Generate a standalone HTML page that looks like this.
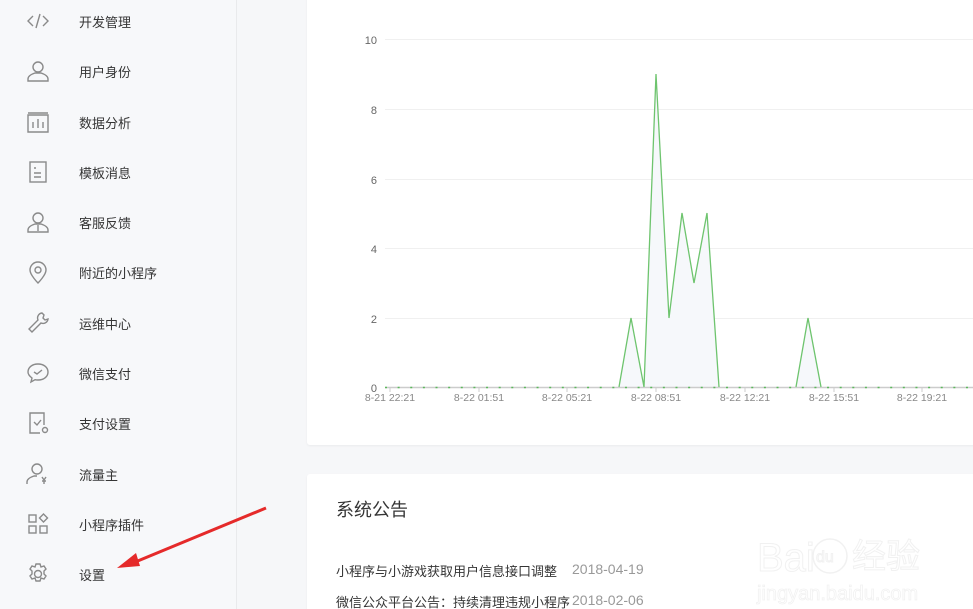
<!DOCTYPE html>
<html><head><meta charset="utf-8">
<style>
*{margin:0;padding:0;box-sizing:border-box}
html,body{width:973px;height:609px;overflow:hidden}
body{background:#f6f7f9;font-family:"Liberation Sans","Noto Sans CJK SC",sans-serif;position:relative}
#side{position:absolute;left:0;top:0;width:237px;height:609px;background:#f7f8fa;border-right:1px solid #e9eaec}
.it{position:absolute;left:0;width:237px;height:30px}
.it svg{position:absolute;left:25px;top:1px;width:26px;height:26px}
.it span{position:absolute;left:79px;top:5px;font-size:13px;color:#353535}
.card{position:absolute;left:307px;background:#fff;border-radius:3px;box-shadow:0 1px 2px rgba(0,0,0,.05)}
</style></head><body>
<div id="side">
<div class="it" style="top:7px"><svg viewBox="0 0 26 26" fill="none" stroke="#8a8a8a" stroke-width="1.4"><path d="M8 8l-5 5 5 5M18 8l5 5-5 5M15 6l-4 14"/></svg><span>开发管理</span></div>
<div class="it" style="top:57px"><svg viewBox="0 0 26 26" fill="none" stroke="#8a8a8a" stroke-width="1.4"><circle cx="13" cy="9" r="5"/><path d="M3 23v-2c0-3 4-5 7-6h6c3 1 7 3 7 6v2z"/></svg><span>用户身份</span></div>
<div class="it" style="top:108px"><svg viewBox="0 0 26 26" fill="none" stroke="#8a8a8a" stroke-width="1.4"><path d="M3 4h20M3 6h20v17H3zM8 19v-6M13 19v-9M18 19v-6"/></svg><span>数据分析</span></div>
<div class="it" style="top:158px"><svg viewBox="0 0 26 26" fill="none" stroke="#8a8a8a" stroke-width="1.4"><rect x="5" y="3" width="16" height="20"/><path d="M9 9h2M9 14h7M9 18h7"/></svg><span>模板消息</span></div>
<div class="it" style="top:208px"><svg viewBox="0 0 26 26" fill="none" stroke="#8a8a8a" stroke-width="1.4"><circle cx="13" cy="9" r="5"/><path d="M3 23v-2c0-3 4-5 7-6h6c3 1 7 3 7 6v2zM13 16v6"/></svg><span>客服反馈</span></div>
<div class="it" style="top:258px"><svg viewBox="0 0 26 26" fill="none" stroke="#8a8a8a" stroke-width="1.4"><path d="M13 24s-8-8-8-13a8 8 0 0116 0c0 5-8 13-8 13z"/><circle cx="13" cy="11" r="3"/></svg><span>附近的小程序</span></div>
<div class="it" style="top:309px"><svg viewBox="0 0 26 26" fill="none" stroke="#8a8a8a" stroke-width="1.4"><path d="M17 3a5 5 0 00-4 7L4 19l3 3 9-9a5 5 0 007-4l-3 1-2-2 1-3z"/></svg><span>运维中心</span></div>
<div class="it" style="top:359px"><svg viewBox="0 0 26 26" fill="none" stroke="#8a8a8a" stroke-width="1.4"><path d="M13 4c6 0 10 3.5 10 8s-4 8-10 8c-1 0-2 0-3-.3L6 22l1-4c-2-1.5-4-3.5-4-6 0-4.5 4-8 10-8z"/><path d="M9 12l3 2 5-4"/></svg><span>微信支付</span></div>
<div class="it" style="top:409px"><svg viewBox="0 0 26 26" fill="none" stroke="#8a8a8a" stroke-width="1.4"><path d="M15 23H5V3h14v12"/><path d="M9 12l3 3 4-5"/><circle cx="20" cy="20" r="2.5"/></svg><span>支付设置</span></div>
<div class="it" style="top:460px"><svg viewBox="0 0 26 26" fill="none" stroke="#8a8a8a" stroke-width="1.4"><circle cx="12" cy="8" r="5"/><path d="M2 23v-2c0-3 4-5 7-6h3M17 16l2 3 2-3M19 19v4M17 20h4"/></svg><span>流量主</span></div>
<div class="it" style="top:510px"><svg viewBox="0 0 26 26" fill="none" stroke="#8a8a8a" stroke-width="1.4"><rect x="4" y="4" width="7" height="7"/><rect x="4" y="15" width="7" height="7"/><rect x="15" y="15" width="7" height="7"/><path d="M18.5 3l4 4-4 4-4-4z"/></svg><span>小程序插件</span></div>
<div class="it" style="top:560px"><svg viewBox="0 0 26 26" fill="none" stroke="#8a8a8a" stroke-width="1.4"><path d="M11 3h4l1 3 3-1 2 3-2 2 0 3 2 2-2 3-3-1-1 3h-4l-1-3-3 1-2-3 2-2v-3l-2-2 2-3 3 1z"/><circle cx="13" cy="13" r="3.5"/></svg><span>设置</span></div>
</div>

<div class="card" style="top:-5px;width:670px;height:450px"></div>
<div class="card" style="top:474px;width:670px;height:140px"></div>

<svg style="position:absolute;left:0;top:0" width="973" height="609">
<g stroke="#f0f0f0" stroke-width="1">
<line x1="385" y1="39.5" x2="973" y2="39.5"/><line x1="385" y1="109.5" x2="973" y2="109.5"/><line x1="385" y1="179.5" x2="973" y2="179.5"/><line x1="385" y1="248.5" x2="973" y2="248.5"/><line x1="385" y1="318.5" x2="973" y2="318.5"/>
</g>
<g font-size="11" fill="#666" text-anchor="end" font-family="Liberation Sans,sans-serif">
<text x="377" y="44">10</text><text x="377" y="114">8</text><text x="377" y="184">6</text><text x="377" y="253">4</text><text x="377" y="323">2</text><text x="377" y="392">0</text>
</g>
<polygon points="619,387 631,318 644,387 656,74 669,318 682,213 694,283 707,213 719,387" fill="#f6f8fb"/>
<polygon points="796,387 808,318 821,387" fill="#f6f8fb"/>
<line x1="385" y1="387.5" x2="973" y2="387.5" stroke="#ccc" stroke-width="1.5"/>
<line x1="385" y1="387.5" x2="973" y2="387.5" stroke="#5cb85c" stroke-width="1.5" stroke-dasharray="2 10.63"/>
<polyline points="619,387 631,318 644,387 656,74 669,318 682,213 694,283 707,213 719,387" fill="none" stroke="#6ec46e" stroke-width="1.3"/>
<polyline points="796,387 808,318 821,387" fill="none" stroke="#6ec46e" stroke-width="1.3"/>
<g stroke="#ccc"><line x1="390" y1="388" x2="390" y2="392"/><line x1="479" y1="388" x2="479" y2="392"/><line x1="567" y1="388" x2="567" y2="392"/><line x1="656" y1="388" x2="656" y2="392"/><line x1="745" y1="388" x2="745" y2="392"/><line x1="834" y1="388" x2="834" y2="392"/><line x1="922" y1="388" x2="922" y2="392"/></g>
<g font-size="10.5" fill="#888" text-anchor="middle" font-family="Liberation Sans,sans-serif">
<text x="390" y="401">8-21 22:21</text><text x="479" y="401">8-22 01:51</text><text x="567" y="401">8-22 05:21</text><text x="656" y="401">8-22 08:51</text><text x="745" y="401">8-22 12:21</text><text x="834" y="401">8-22 15:51</text><text x="922" y="401">8-22 19:21</text>
</g>
<text x="336" y="516" font-size="18" fill="#353535" font-family="Liberation Sans,Noto Sans CJK SC,sans-serif">系统公告</text>
<text x="336" y="576" font-size="13" fill="#353535" font-family="Liberation Sans,Noto Sans CJK SC,sans-serif">小程序与小游戏获取用户信息接口调整</text>
<text x="572" y="574" font-size="14" fill="#999" font-family="Liberation Sans,sans-serif">2018-04-19</text>
<text x="336" y="607" font-size="13" fill="#353535" font-family="Liberation Sans,Noto Sans CJK SC,sans-serif">微信公众平台公告：持续清理违规小程序</text>
<text x="572" y="605" font-size="14" fill="#999" font-family="Liberation Sans,sans-serif">2018-02-06</text>
<g opacity="0.4">
<text x="757" y="571" font-size="40" fill="#fff" stroke="#ddd" stroke-width="1" font-family="Liberation Sans,sans-serif">Bai</text>
<circle cx="830" cy="556" r="17" fill="none" stroke="#ddd" stroke-width="1.5"/>
<text x="816" y="562" font-size="16" fill="#fff" stroke="#ddd" font-family="Liberation Sans,sans-serif">du</text>
<text x="852" y="568" font-size="34" fill="#fff" stroke="#ddd" font-family="Noto Sans CJK SC,sans-serif">经验</text>
<text x="757" y="600" font-size="20" fill="#fff" stroke="#ddd" stroke-width=".8" font-family="Liberation Sans,sans-serif">jingyan.baidu.com</text>
</g>
<line x1="266" y1="508" x2="128" y2="565" stroke="#e52a2a" stroke-width="3"/>
<polygon points="117,568 136,553 140,566" fill="#e52a2a"/>
</svg>
</body></html>
